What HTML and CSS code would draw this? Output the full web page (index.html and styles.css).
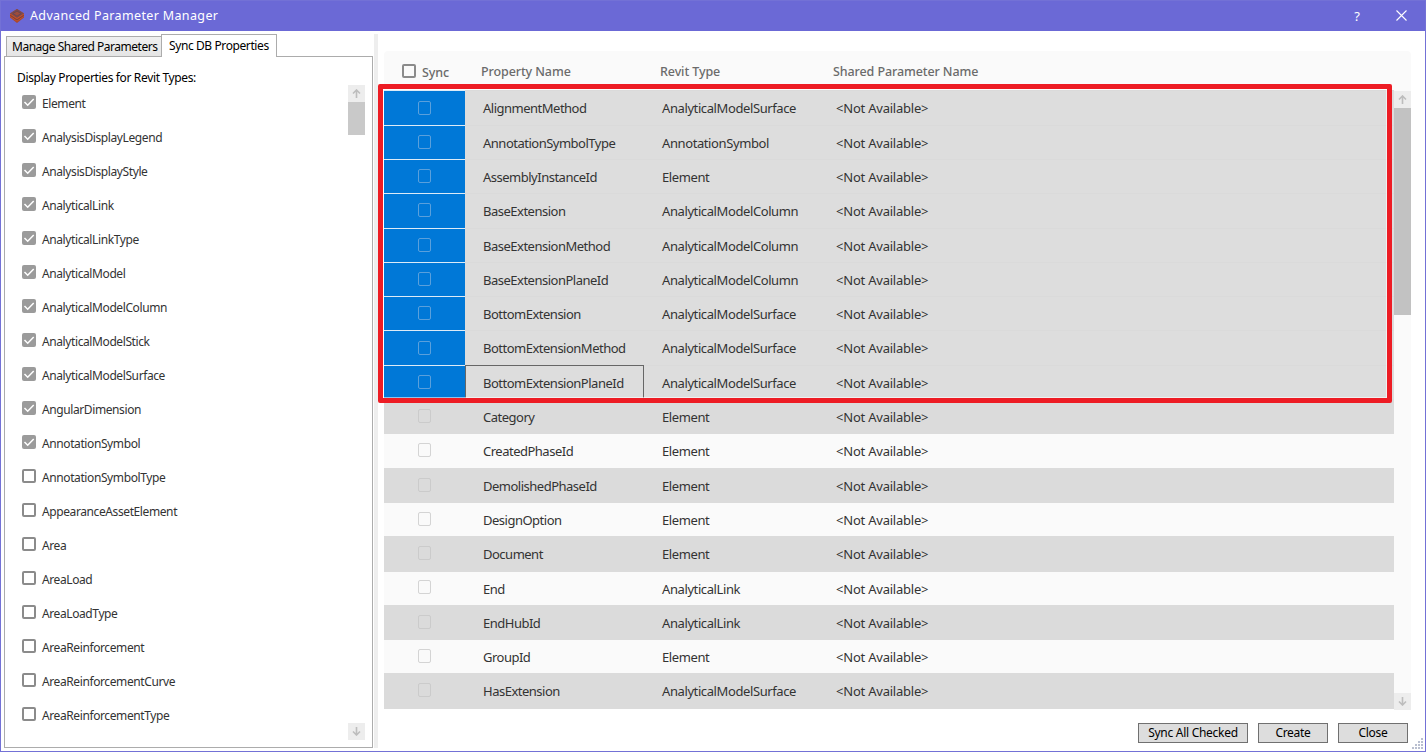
FILE: index.html
```
<!DOCTYPE html>
<html lang="en">
<head>
<meta charset="utf-8">
<title>Advanced Parameter Manager</title>
<link rel="stylesheet" href="styles.css">
</head>
<body>
<div class="window">
  <header class="titlebar">
    <svg class="app-icon" width="16" height="16" viewBox="0 0 16 16"><path d="M1 5.500L8 1l7 4.500v4L8 15l-7-5.500z" fill="#a9472c"/><path d="M1 5.500L8 1l7 4.500L8 10z" fill="#7d4a4e"/><path d="M4 5.600L8 3l4 2.600L8 8.200z" fill="#9d4c3c" stroke="#6a4550"/><path d="M1 6l7 4.500L15 6M1.500 8.500L8 13l6.500-4.500" fill="none" stroke="#c6532b"/><path d="M1.500 7.500L8 12l6.500-4.500" fill="none" stroke="#713c3b" stroke-width=".8"/></svg>
    <h1 class="title">Advanced Parameter Manager</h1>
    <span class="help">?</span>
    <svg class="close-icon" width="11" height="11" viewBox="0 0 11 11"><path d="M.5.5l10 10M10.500.5l-10 10" stroke="#fff" stroke-width="1.100"/></svg>
  </header>
  <main class="content">
    <section class="sidebar">
      <nav class="tabs">
        <div class="tab"><span>Manage Shared Parameters</span></div>
        <div class="tab tab-active"><span>Sync DB Properties</span></div>
      </nav>
      <div class="tab-panel">
        <div class="types">
          <p class="types-label">Display Properties for Revit Types:</p>
          <ul class="type-list" id="types"></ul>
        </div>
        <div class="scrollbar scrollbar-left">
          <div class="scroll-button"><svg width="9" height="9" viewBox="0 0 9 9"><path d="M4.500 9V1M1 4.500L4.500 1 8 4.500"/></svg></div>
          <div class="thumb"></div>
          <div class="scroll-button scroll-down"><svg width="9" height="9" viewBox="0 0 9 9"><path d="M4.500 0v8M1 4.500L4.500 8 8 4.500"/></svg></div>
        </div>
      </div>
    </section>
    <div class="splitter"></div>
    <section class="main-pane">
      <div class="grid">
        <div class="grid-head">
          <div class="head-sync"><span class="box"></span><span class="sync-label">Sync</span></div>
          <div class="head-name">Property Name</div>
          <div class="head-type">Revit Type</div>
          <div class="head-param">Shared Parameter Name</div>
        </div>
        <div class="grid-body">
          <div class="rows" id="rows"></div>
          <div class="scrollbar scrollbar-right">
            <div class="scroll-button"><svg width="9" height="9" viewBox="0 0 9 9"><path d="M4.500 9V1M1 4.500L4.500 1 8 4.500"/></svg></div>
            <div class="thumb"></div>
            <div class="scroll-button scroll-down"><svg width="9" height="9" viewBox="0 0 9 9"><path d="M4.500 0v8M1 4.500L4.500 8 8 4.500"/></svg></div>
          </div>
        </div>
        <div class="highlight"></div>
      </div>
      <footer class="actions">
        <button class="button button-wide">Sync All Checked</button>
        <button class="button">Create</button>
        <button class="button">Close</button>
      </footer>
    </section>
  </main>
  <svg class="grip" width="12" height="12" viewBox="0 0 12 12" fill="#b9bfd0"><path d="M9 0h2v2H9zM6 3h2v2H6zM9 3h2v2H9zM3 6h2v2H3zM6 6h2v2H6zM9 6h2v2H9zM0 9h2v2H0zM3 9h2v2H3zM6 9h2v2H6zM9 9h2v2H9z"/></svg>
</div>
<script src="app.js"></script>
</body>
</html>
```

FILE: styles.css
```
* { box-sizing: border-box; }
body {
  margin: 0;
  font-family: "Noto Sans", "Open Sans", sans-serif;
  font-size: 12px;
  color: #000;
}
.window {
  position: relative;
  width: 1426px;
  height: 752px;
  border: 1px solid #7371d6;
  background: #fff;
  overflow: hidden;
}
.titlebar {
  display: flex;
  align-items: center;
  height: 30px;
  padding: 0 18px 1px 8px;
  background: #6b69d6;
  color: #fff;
}
.title {
  flex: 1;
  margin: 0 0 0 5px;
  font-size: 12.5px;
  font-weight: 400;
  letter-spacing: 0.36px;
}
.help { margin-right: 36px; font-size: 13px; }
.content { display: flex; height: 720px; }

.sidebar {
  width: 369px;
  margin-left: 3px;
  padding-top: 3px;
}
.tabs { display: flex; align-items: flex-end; height: 22px; padding-left: 2px; }
.tab {
  width: 156px;
  height: 20px;
  border: 1px solid #acacac;
  border-bottom: 0;
  background: linear-gradient(#f0f0f0, #e5e5e5);
  line-height: 20px;
  padding-left: 5px;
  white-space: nowrap;
  letter-spacing: -0.48px;
}
.tab-active {
  position: relative;
  width: 116px;
  height: 23px;
  margin: 0 0 -1px -1px;
  padding-left: 7px;
  background: #fff;
  line-height: 22px;
  letter-spacing: -0.4px;
}
.tab-panel {
  display: flex;
  justify-content: space-between;
  height: 692px;
  border: 1px solid #acacac;
}
.types { padding: 12px 0 0 12px; }
.types-label { margin: 0; height: 17px; line-height: 17px; letter-spacing: -0.35px; }
.type-list { margin: 0; padding: 0 0 0 5px; list-style: none; }
.type {
  display: flex;
  align-items: center;
  height: 34px;
  color: #333;
  letter-spacing: -0.4px;
  white-space: nowrap;
}
.box {
  width: 14px;
  height: 14px;
  flex: none;
  border: 2px solid #8b8b8b;
  border-radius: 2px;
}
.type .box { margin: -3px 6px 0 0; }
.type .box-checked { border: 0; background: #9b9b9b; display: flex; }

.scrollbar { display: flex; flex-direction: column; width: 17px; }
.scroll-button {
  display: flex;
  align-items: center;
  justify-content: center;
  height: 17px;
  background: #ededed;
}
.scroll-button svg { fill: none; stroke: #bdbdbd; stroke-width: 1.6; }
.scroll-down { margin-top: auto; }
.scrollbar-left { margin: 28px 7px 7px 0; }
.scrollbar-left .thumb { height: 33px; background: #c9c9c9; }
.scrollbar-right { height: 619px; }
.scrollbar-right .thumb { height: 207px; background: #c2c2c2; }

.splitter { width: 4px; margin: 3px 0 3px 1px; background: #eee; }
.main-pane { width: 1027px; margin: 20px 0 0 6px; }
.grid {
  position: relative;
  height: 658px;
  background: #fafafa;
  border-radius: 4px;
}
.grid-head {
  display: flex;
  height: 40px;
  align-items: center;
  color: #6b6b6b;
  font-weight: 500;
  font-size: 12.5px;
  letter-spacing: -0.1px;
}
.head-sync { display: flex; align-items: center; width: 97px; padding-left: 18px; }
.head-sync .box { margin-top: -1px; }
.sync-label { margin: 2px 0 0 6px; }
.head-name { width: 179px; }
.head-type { width: 173px; }
.grid-body { display: flex; }
.rows { width: 1010px; height: 618px; margin-top: -0.6px; }
.row {
  display: flex;
  align-items: center;
  height: 34.3px;
  font-size: 13px;
  letter-spacing: -0.5px;
  color: #333;
  white-space: nowrap;
}
.row-alt { background: #dbdbdb; box-shadow: 0 1px #dbdbdb; }
.row-selected { background: #ddd; box-shadow: inset 0 1px #dadada; }
.cell-sync {
  display: flex;
  width: 81px;
  height: 100%;
  align-items: center;
  justify-content: center;
}
.row .box { width: 13px; height: 14px; border: 1.5px solid #d4d4d4; margin-top: -0.5px; }
.row-alt .box { border-color: #cbcbcb; }
.row-selected .cell-sync { background: #0078d7; border-top: 1px solid #ddebf7; }
.row-selected .box { border-color: #5aa0dc; margin-top: -1px; }
.cell-name {
  display: flex;
  align-items: center;
  width: 179px;
  height: 100%;
  padding-left: 17px;
  border: 1px solid transparent;
}
.cell-name span, .cell-type, .cell-param { padding-top: 1.6px; }
.cell-focus { border-color: #666; }
.cell-type { width: 174px; padding-left: 18px; letter-spacing: -0.4px; }
.cell-param { padding-left: 18px; letter-spacing: -0.22px; }
.highlight {
  position: absolute;
  left: -6px;
  top: 33px;
  width: 1014px;
  height: 319px;
  border: 5px solid #ed1c24;
  border-radius: 2px;
  box-shadow: inset 0 0 0 1px rgba(255, 255, 255, 0.55);
}
.actions { display: flex; justify-content: flex-end; gap: 10px; padding: 14px 3px 0 0; }
.button {
  width: 70px;
  height: 20px;
  padding: 0 0 1px;
  border: 1px solid #707070;
  background: #ddd;
  color: #000;
  font: inherit;
  letter-spacing: -0.28px;
  line-height: 17px;
}
.button-wide { width: 110px; }
.grip { position: absolute; right: 1px; bottom: 1px; }
```

FILE: app.js
```
const types = [
  "Element", "AnalysisDisplayLegend", "AnalysisDisplayStyle", "AnalyticalLink",
  "AnalyticalLinkType", "AnalyticalModel", "AnalyticalModelColumn", "AnalyticalModelStick",
  "AnalyticalModelSurface", "AngularDimension", "AnnotationSymbol", "AnnotationSymbolType",
  "AppearanceAssetElement", "Area", "AreaLoad", "AreaLoadType", "AreaReinforcement",
  "AreaReinforcementCurve", "AreaReinforcementType"
];
const checkedCount = 11;
const tick = '<svg width="14" height="14" viewBox="0 0 14 14"><path d="M2.500 7l3.200 3.200L11.700 4" fill="none" stroke="#fff" stroke-width="1.500"/></svg>';

document.getElementById("types").innerHTML = types.map((name, i) =>
  `<li class="type"><span class="box${i < checkedCount ? " box-checked" : ""}">${i < checkedCount ? tick : ""}</span><span>${name}</span></li>`
).join("");

const properties = [
  ["AlignmentMethod", "AnalyticalModelSurface"],
  ["AnnotationSymbolType", "AnnotationSymbol"],
  ["AssemblyInstanceId", "Element"],
  ["BaseExtension", "AnalyticalModelColumn"],
  ["BaseExtensionMethod", "AnalyticalModelColumn"],
  ["BaseExtensionPlaneId", "AnalyticalModelColumn"],
  ["BottomExtension", "AnalyticalModelSurface"],
  ["BottomExtensionMethod", "AnalyticalModelSurface"],
  ["BottomExtensionPlaneId", "AnalyticalModelSurface"],
  ["Category", "Element"],
  ["CreatedPhaseId", "Element"],
  ["DemolishedPhaseId", "Element"],
  ["DesignOption", "Element"],
  ["Document", "Element"],
  ["End", "AnalyticalLink"],
  ["EndHubId", "AnalyticalLink"],
  ["GroupId", "Element"],
  ["HasExtension", "AnalyticalModelSurface"]
];
const selectedCount = 9;

document.getElementById("rows").innerHTML = properties.map(([name, type], i) => {
  const state = i < selectedCount ? " row-selected" : i % 2 ? " row-alt" : "";
  const focus = i === selectedCount - 1 ? " cell-focus" : "";
  return `<div class="row${state}"><div class="cell-sync"><span class="box"></span></div>` +
    `<div class="cell-name${focus}"><span>${name}</span></div><div class="cell-type"><span>${type}</span></div>` +
    `<div class="cell-param"><span>&lt;Not Available&gt;</span></div></div>`;
}).join("");
```
